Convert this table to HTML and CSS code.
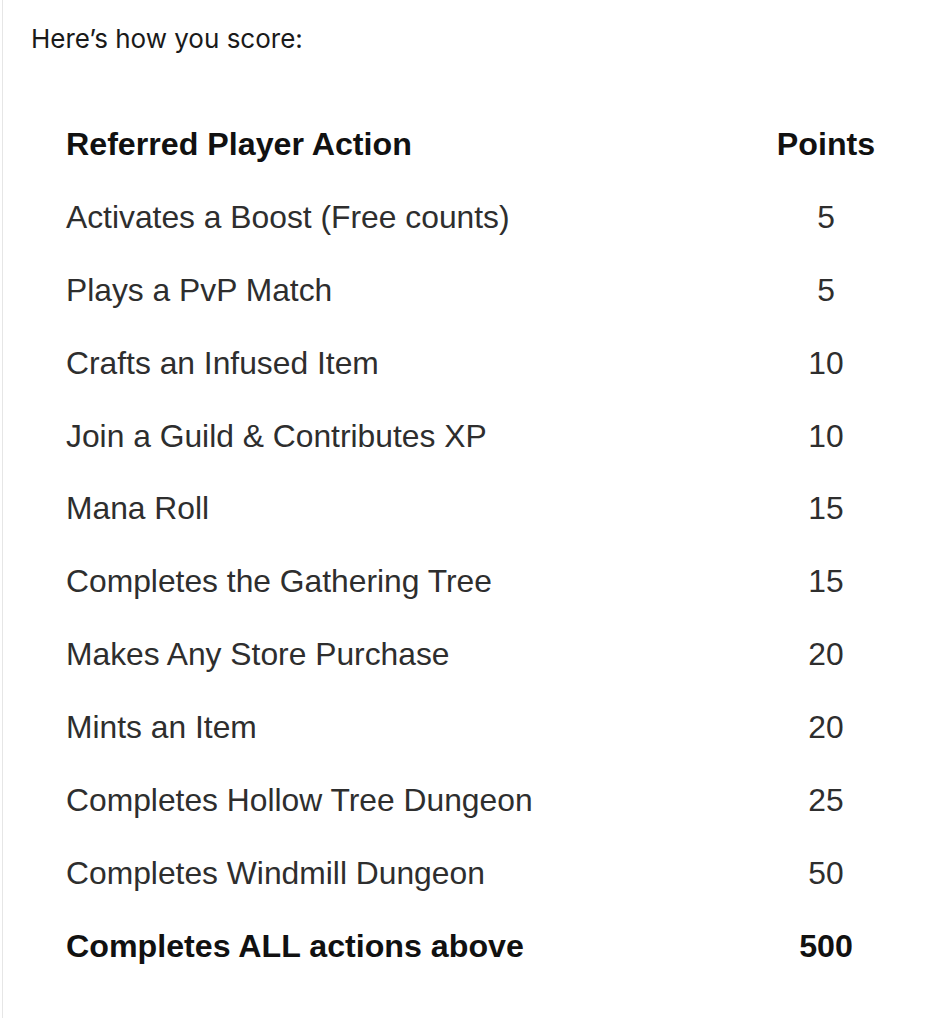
FILE: index.html
```html
<!DOCTYPE html>
<html lang="en">
<head>
    <meta charset="UTF-8">
    <meta name="viewport" content="width=device-width, initial-scale=1.0">
    <title>Scoring</title>
    <link rel="stylesheet" href="styles.css">
</head>
<body>
    <div class="post">
        <p class="intro">Here’s how you score:</p>

        <!-- Points table -->
        <div class="score-table">
            <div class="row head">
                <span class="action">Referred Player Action</span>
                <span class="points">Points</span>
            </div>
            <div class="row">
                <span class="action">Activates a Boost (Free counts)</span>
                <span class="points">5</span>
            </div>
            <div class="row">
                <span class="action">Plays a PvP Match</span>
                <span class="points">5</span>
            </div>
            <div class="row">
                <span class="action">Crafts an Infused Item</span>
                <span class="points">10</span>
            </div>
            <div class="row">
                <span class="action">Join a Guild &amp; Contributes XP</span>
                <span class="points">10</span>
            </div>
            <div class="row">
                <span class="action">Mana Roll</span>
                <span class="points">15</span>
            </div>
            <div class="row">
                <span class="action">Completes the Gathering Tree</span>
                <span class="points">15</span>
            </div>
            <div class="row">
                <span class="action">Makes Any Store Purchase</span>
                <span class="points">20</span>
            </div>
            <div class="row">
                <span class="action">Mints an Item</span>
                <span class="points">20</span>
            </div>
            <div class="row">
                <span class="action">Completes Hollow Tree Dungeon</span>
                <span class="points">25</span>
            </div>
            <div class="row">
                <span class="action">Completes Windmill Dungeon</span>
                <span class="points">50</span>
            </div>
            <div class="row total">
                <span class="action">Completes ALL actions above</span>
                <span class="points">500</span>
            </div>
        </div>
    </div>
</body>
</html>
```

FILE: styles.css
```css
body {
    margin: 0;
    padding: 0;
    background: #fff;
}

.post {
    margin-left: 2px;
    min-height: 1018px;
    border-left: 1px solid #e6e6e6;
    padding: 0 0 0 28px;
    font-family: Inter, "Noto Sans", sans-serif;
    color: #1a1a1a;
}

.intro {
    margin: 0;
    padding-top: 22px;
    font-size: 26px;
    line-height: 34px;
}

.score-table {
    margin: 52px 0 0 35px;
    width: 820px;
    font-family: "Liberation Sans", Arial, sans-serif;
    font-size: 31.8px;
    color: #2e2e2e;
}

.row {
    display: grid;
    grid-template-columns: 1fr 120px;
    height: 72.9px;
    line-height: 72.9px;
}

.points {
    text-align: center;
}

.head,
.total {
    font-weight: bold;
    font-size: 32.2px;
    color: #111;
}
```
